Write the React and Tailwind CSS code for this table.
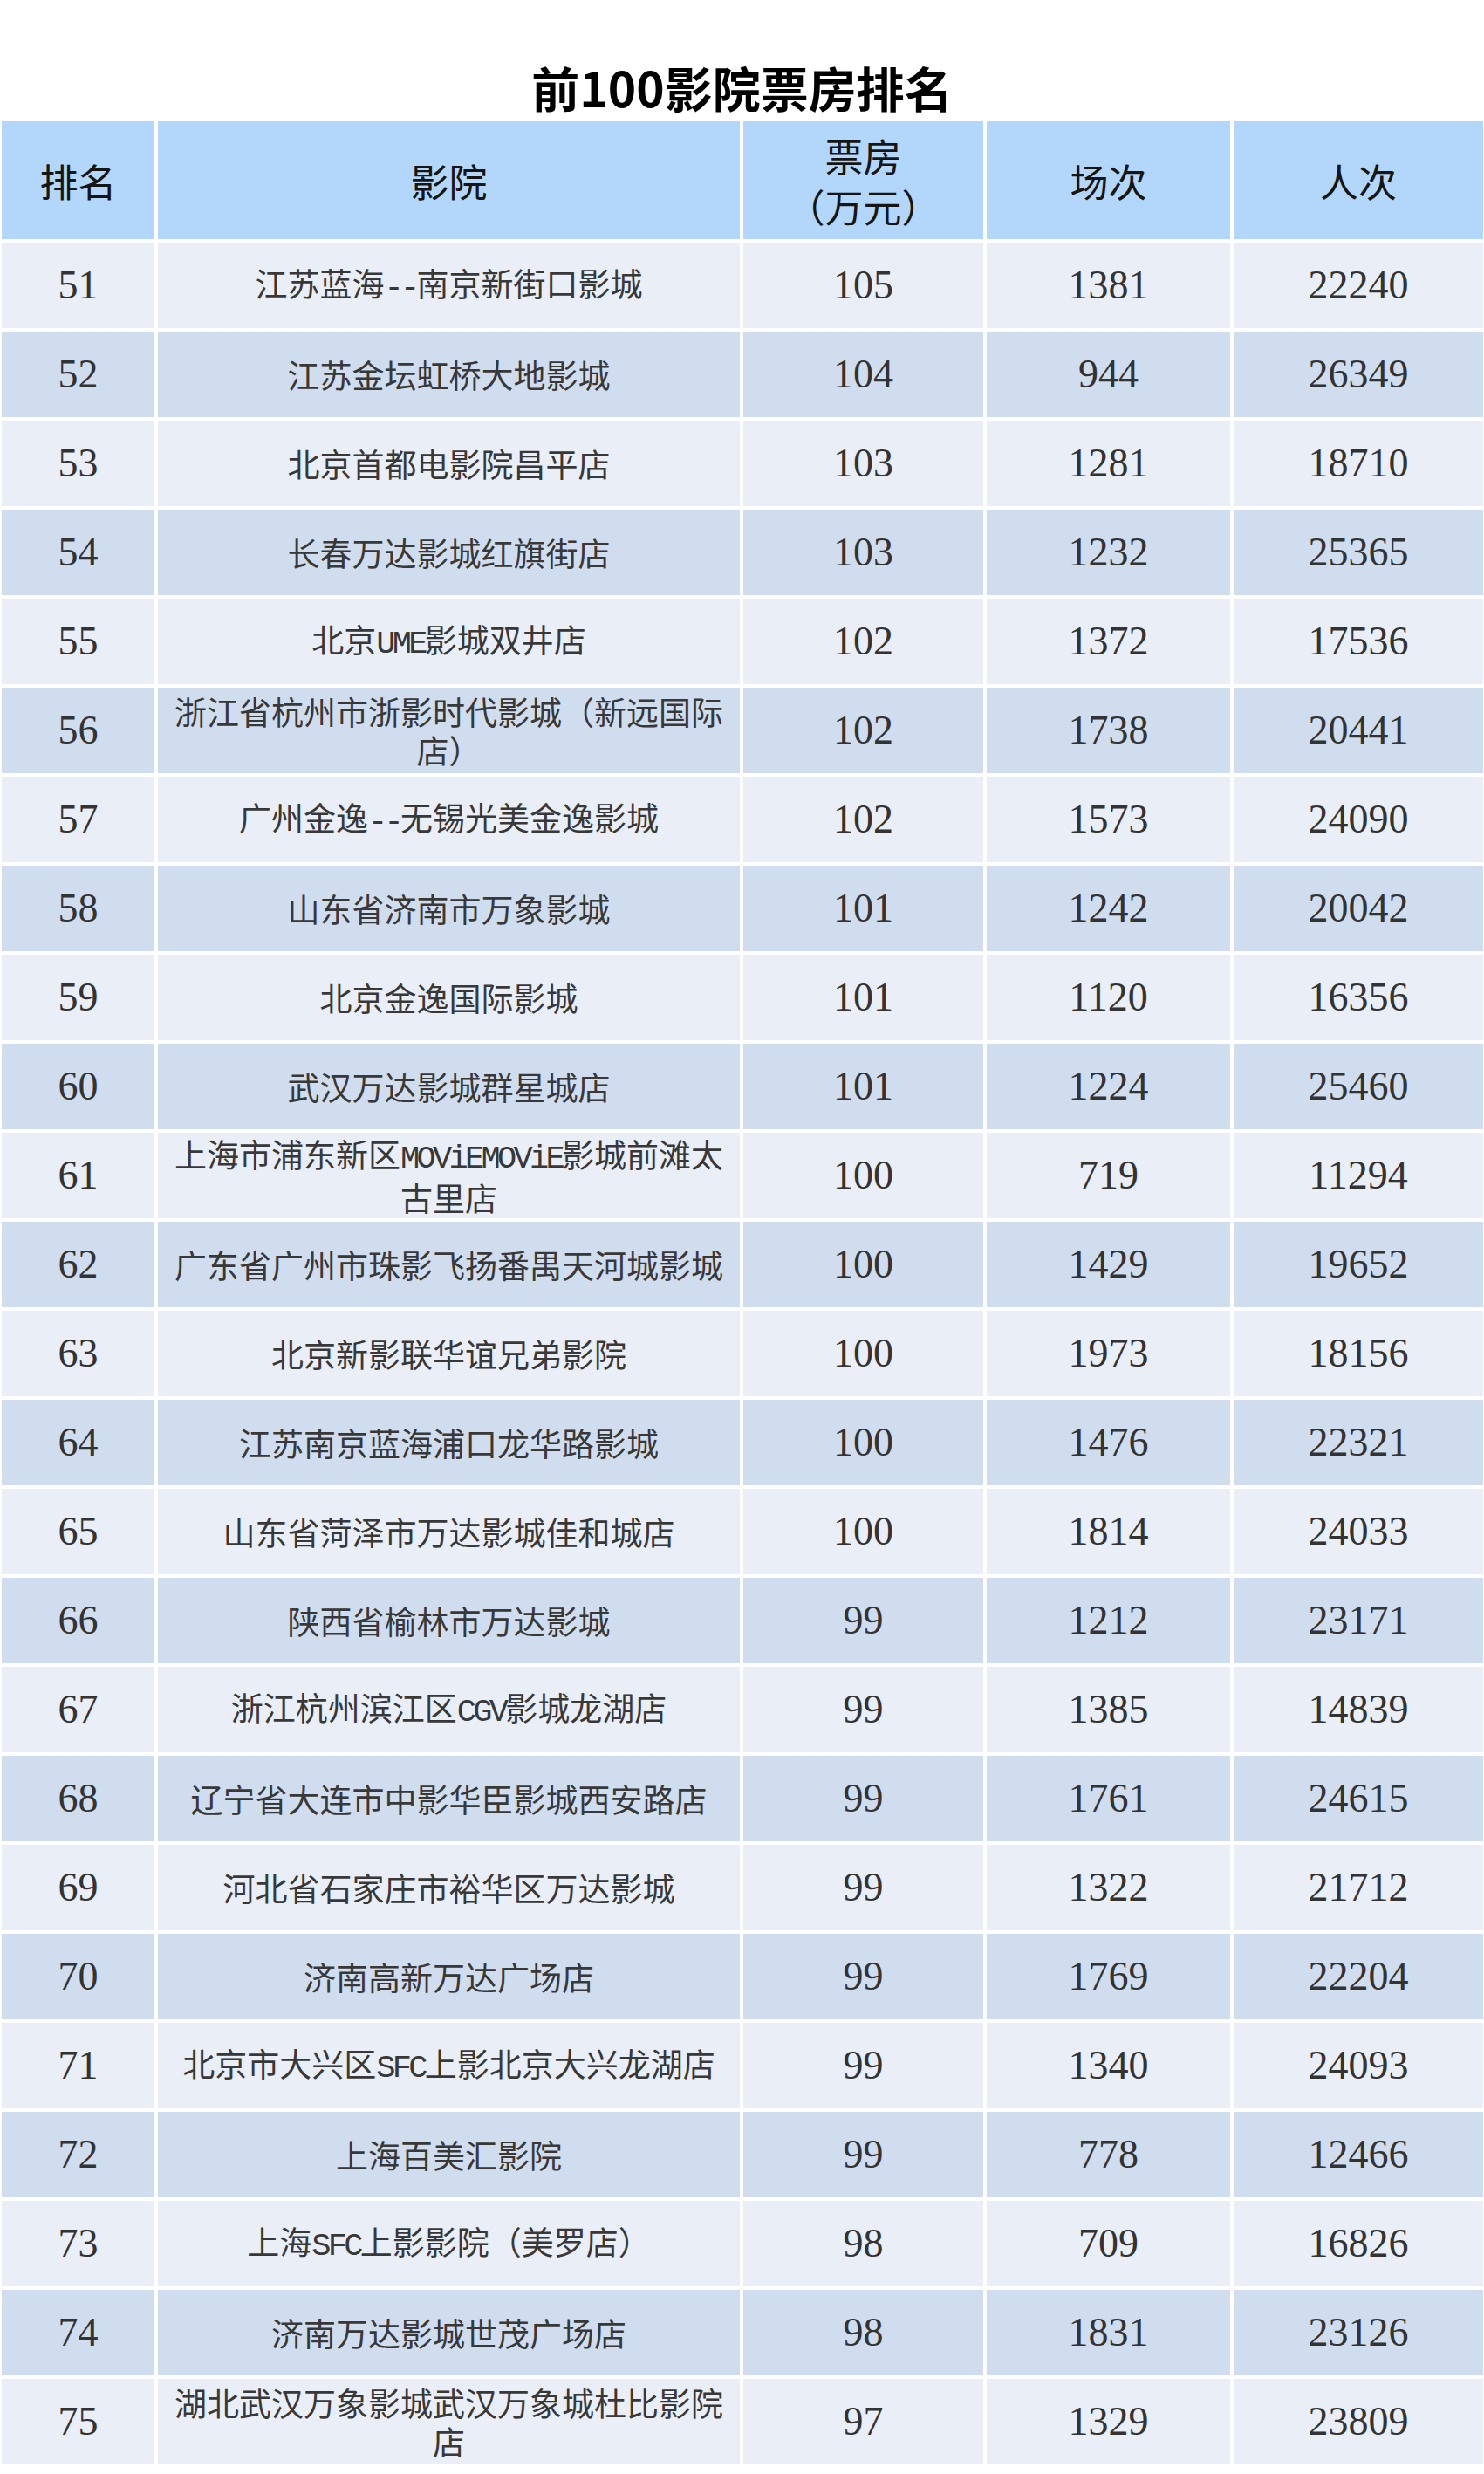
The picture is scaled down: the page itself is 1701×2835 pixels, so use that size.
import React from 'react';

const rows = [
  [51, ['江苏蓝海--南京新街口影城'], 105, 1381, 22240],
  [52, ['江苏金坛虹桥大地影城'], 104, 944, 26349],
  [53, ['北京首都电影院昌平店'], 103, 1281, 18710],
  [54, ['长春万达影城红旗街店'], 103, 1232, 25365],
  [55, ['北京UME影城双井店'], 102, 1372, 17536],
  [56, ['浙江省杭州市浙影时代影城（新远国际', '店）'], 102, 1738, 20441],
  [57, ['广州金逸--无锡光美金逸影城'], 102, 1573, 24090],
  [58, ['山东省济南市万象影城'], 101, 1242, 20042],
  [59, ['北京金逸国际影城'], 101, 1120, 16356],
  [60, ['武汉万达影城群星城店'], 101, 1224, 25460],
  [61, ['上海市浦东新区MOViEMOViE影城前滩太', '古里店'], 100, 719, 11294],
  [62, ['广东省广州市珠影飞扬番禺天河城影城'], 100, 1429, 19652],
  [63, ['北京新影联华谊兄弟影院'], 100, 1973, 18156],
  [64, ['江苏南京蓝海浦口龙华路影城'], 100, 1476, 22321],
  [65, ['山东省菏泽市万达影城佳和城店'], 100, 1814, 24033],
  [66, ['陕西省榆林市万达影城'], 99, 1212, 23171],
  [67, ['浙江杭州滨江区CGV影城龙湖店'], 99, 1385, 14839],
  [68, ['辽宁省大连市中影华臣影城西安路店'], 99, 1761, 24615],
  [69, ['河北省石家庄市裕华区万达影城'], 99, 1322, 21712],
  [70, ['济南高新万达广场店'], 99, 1769, 22204],
  [71, ['北京市大兴区SFC上影北京大兴龙湖店'], 99, 1340, 24093],
  [72, ['上海百美汇影院'], 99, 778, 12466],
  [73, ['上海SFC上影影院（美罗店）'], 98, 709, 16826],
  [74, ['济南万达影城世茂广场店'], 98, 1831, 23126],
  [75, ['湖北武汉万象影城武汉万象城杜比影院', '店'], 97, 1329, 23809],
];

// latin runs in the names are half-width, like SimSun
function NameLine({ text }) {
  const parts = text.split(/([A-Za-z0-9\-]+)/).filter(Boolean);
  return (
    <div className="whitespace-nowrap">
      {parts.map((p, i) =>
        /^[A-Za-z0-9\-]+$/.test(p) ? (
          <span key={i} className="[font-family:'Liberation_Mono',monospace] tracking-[-0.1em]">
            {p}
          </span>
        ) : (
          <span key={i}>{p}</span>
        )
      )}
    </div>
  );
}

function Cell({ bg, children, className = '' }) {
  return (
    <div className={`${bg} flex flex-col items-center justify-center text-center ${className}`}>
      {children}
    </div>
  );
}

const head = "h-[135px] text-[44px] text-[#151515] [font-family:'Noto_Sans_CJK_SC',sans-serif]";

function App() {
  return (
    <div className="w-[1701px] min-h-[2835px] bg-white">
      {/* title */}
      <div className="h-[139px] pt-[66px] text-center">
        <h1 className="text-[55px] leading-[66px] font-bold text-black [font-family:'Noto_Sans_CJK_SC',sans-serif]">
          前100影院票房排名
        </h1>
      </div>

      <div className="pl-[2px] grid grid-cols-[175px_667px_275px_279px_286px] gap-[4px]">
        {/* header */}
        <Cell bg="bg-[#b3d7fa]" className={head}>排名</Cell>
        <Cell bg="bg-[#b3d7fa]" className={head}>影院</Cell>
        <Cell bg="bg-[#b3d7fa]" className={`${head} leading-[58px]`}>
          <div>票房</div>
          <div>（万元）</div>
        </Cell>
        <Cell bg="bg-[#b3d7fa]" className={head}>场次</Cell>
        <Cell bg="bg-[#b3d7fa]" className={head}>人次</Cell>

        {/* body */}
        {rows.map(([rank, name, box, shows, people], i) => {
          const bg = i % 2 === 0 ? 'bg-[#e9eef7]' : 'bg-[#d0ddef]';
          const num = "h-[98px] text-[46px] leading-none text-[#333] [font-family:'Liberation_Serif',serif]";
          return (
            <React.Fragment key={rank}>
              <Cell bg={bg} className={num}>{rank}</Cell>
              <Cell bg={bg} className="h-[98px] text-[37px] leading-[44px] text-[#383838] [font-family:'Noto_Sans_CJK_SC',sans-serif]">
                {name.map((line) => (
                  <NameLine key={line} text={line} />
                ))}
              </Cell>
              <Cell bg={bg} className={num}>{box}</Cell>
              <Cell bg={bg} className={num}>{shows}</Cell>
              <Cell bg={bg} className={num}>{people}</Cell>
            </React.Fragment>
          );
        })}
      </div>
    </div>
  );
}

export default App;
